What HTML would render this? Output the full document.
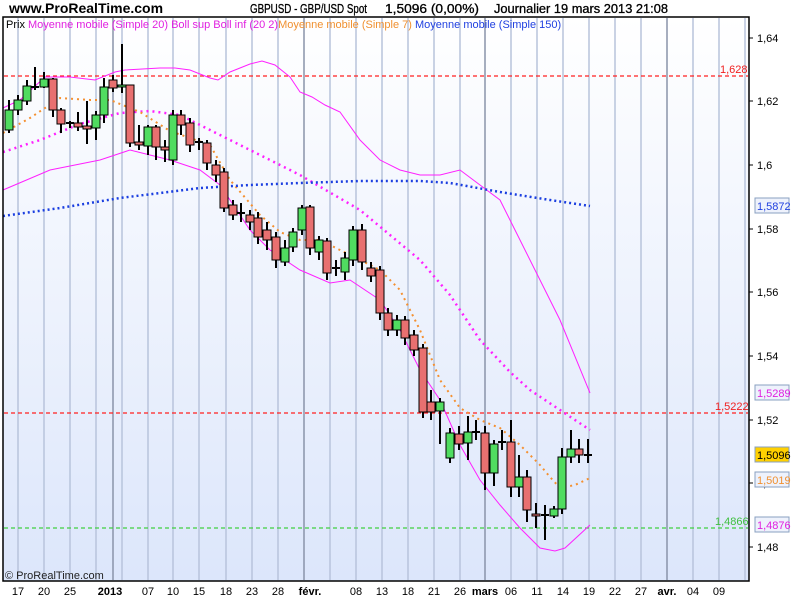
<!DOCTYPE html>
<html><head><meta charset="utf-8"><style>
body{margin:0;background:#fff;width:800px;height:600px;overflow:hidden;font-family:"Liberation Sans",sans-serif}
svg{position:absolute;left:0;top:0}
</style></head><body>
<svg id="s" width="800" height="600" xmlns="http://www.w3.org/2000/svg" font-family="Liberation Sans, sans-serif">
<defs><linearGradient id="g" x1="0" y1="0" x2="0" y2="1"><stop offset="0" stop-color="#ffffff"/><stop offset="1" stop-color="#dce6fb"/></linearGradient></defs>
<rect x="3" y="17" width="746" height="564" fill="url(#g)"/>
<g id="grid"></g>
<g id="lines"></g>
<g id="candles"></g>
<rect x="3" y="17" width="746" height="564" fill="none" stroke="#000" stroke-width="1.5"/>
<text x="9" y="13" font-size="14" font-weight="bold">www.ProRealTime.com</text>
<text x="250" y="13" font-size="12.5" stroke="#000" stroke-width="0.3" textLength="117" lengthAdjust="spacingAndGlyphs">GBPUSD - GBP/USD Spot</text>
<text x="385" y="13" font-size="12.5" stroke="#000" stroke-width="0.3" textLength="94" lengthAdjust="spacingAndGlyphs">1,5096 (0,00%)</text>
<text x="494" y="13" font-size="12.5" stroke="#000" stroke-width="0.3" textLength="174" lengthAdjust="spacingAndGlyphs">Journalier  19 mars 2013 21:08</text>
<text x="6" y="28" font-size="11"><tspan fill="#000">Prix </tspan><tspan fill="#e020e0">Moyenne mobile (Simple 20)  Boll sup Boll inf (20 2)</tspan><tspan fill="#f09030">Moyenne mobile (Simple 7)</tspan><tspan fill="#2040e0">  Moyenne mobile (Simple 150)</tspan></text>
<text x="5" y="579" font-size="11" fill="#222">© ProRealTime.com</text>
<g id="axis" font-size="11"></g>
</svg>
<script>
var NS="http://www.w3.org/2000/svg";
function el(p,t,a,txt){var e=document.createElementNS(NS,t);for(var k in a)e.setAttribute(k,a[k]);if(txt!=null)e.textContent=txt;document.getElementById(p).appendChild(e);return e;}
var gx=[18,44,70,96,122,148,173,199,226,252,278,304,330,356,382,408,434,460,485,511,537,563,589,615,641,667,693,719,745];
gx.forEach(function(x){var d=(x==485||x==667||x==304);el("grid","line",{x1:x,y1:18,x2:x,y2:580,stroke:d?"#8a94aa":"#b8c4dc","stroke-width":1.5});});
el("grid","line",{x1:113,y1:18,x2:113,y2:580,stroke:"#8a94aa","stroke-width":1.5});
el("grid","line",{x1:4,y1:76,x2:748,y2:76,stroke:"#ff2020","stroke-dasharray":"4,3","stroke-width":1.2});
el("grid","line",{x1:4,y1:413,x2:748,y2:413,stroke:"#ff2020","stroke-dasharray":"4,3","stroke-width":1.2});
el("grid","line",{x1:4,y1:528,x2:748,y2:528,stroke:"#40d040","stroke-dasharray":"4,3","stroke-width":1.2});
el("grid","text",{x:720,y:73,"font-size":11,fill:"#f02020"},"1,628");
el("grid","text",{x:715,y:410,"font-size":11,fill:"#f02020"},"1,5222");
el("grid","text",{x:715,y:525,"font-size":11,fill:"#40c040"},"1,4866");
function pl(pts,col,w,dash){el("lines","polyline",{points:pts.map(function(p){return p.join(",")}).join(" "),fill:"none",stroke:col,"stroke-width":w,"stroke-dasharray":dash||"none"});}
pl([[3,108],[20,100],[45,77],[70,77],[95,80],[115,72],[125,70],[160,68],[175,68],[190,70],[210,78],[218,80],[230,72],[250,64],[262,61],[275,65],[290,77],[300,92],[312,97],[325,105],[340,112],[360,140],[380,160],[400,170],[420,175],[440,175],[460,170],[480,185],[500,200],[520,240],[540,280],[560,320],[590,393]],"#ff20ff",1);
pl([[3,190],[50,170],[100,160],[130,150],[170,160],[200,170],[220,185],[250,230],[270,250],[300,270],[330,283],[350,280],[380,300],[400,330],[420,370],[440,400],[460,445],[480,480],[500,505],[520,528],[540,548],[555,551],[565,548],[590,525]],"#ff20ff",1);
pl([[3,152],[40,140],[80,124],[120,113],[150,111],[180,115],[220,135],[260,155],[300,175],[360,210],[420,260],[450,295],[480,340],[510,372],[530,390],[560,410],[590,430]],"#ff20ff",2.5,"2,4");
pl([[3,133],[30,118],[60,98],[90,100],[110,100],[140,112],[170,131],[210,145],[230,180],[260,215],[280,232],[300,240],[320,240],[350,255],[380,270],[400,290],[420,330],[440,380],[460,408],[480,420],[500,428],[520,445],[540,465],[550,477],[560,488],[575,485],[590,478]],"#f49030",2,"2,4");
pl([[3,216],[60,208],[120,198],[200,188],[250,185],[300,183],[360,181],[420,181],[450,183],[500,192],[550,200],[590,206]],"#1a3ee0",2.5,"2,3");
var C=[[9,130,110,100,133],[18,110,100,95,115],[27,101,86,80,105],[35,87,86,67,90],[44,87,79,72,88],[53,79,110,78,117],[61,110,124,108,133],[70,123,123,121,128],[78,123,127,112,131],[87,126,129,101,144],[96,128,115,111,140],[104,115,87,78,123],[113,80,88,75,92],[122,87,85,44,93],[130,85,143,85,147],[139,142,145,125,150],[148,146,127,125,155],[156,127,147,125,160],[165,147,150,140,162],[173,160,115,110,165],[181,115,125,110,135],[190,123,145,118,152],[199,142,142,138,150],[207,143,163,140,170],[216,165,175,160,182],[224,172,208,168,212],[233,205,215,200,220],[241,213,213,203,222],[250,215,222,210,230],[258,218,237,212,244],[267,230,240,222,250],[276,237,260,232,268],[285,262,248,240,266],[293,247,232,228,252],[302,230,208,205,235],[310,207,248,205,255],[319,252,240,236,260],[327,241,273,238,280],[336,268,268,260,276],[345,272,258,252,280],[353,260,230,226,266],[362,230,262,224,270],[371,268,276,262,282],[380,270,313,266,320],[388,313,330,308,336],[397,330,320,315,336],[405,320,338,316,345],[414,335,350,330,356],[423,348,412,344,418],[431,402,412,390,420],[440,411,402,398,444],[450,458,433,428,463],[459,434,444,426,450],[468,443,432,416,460],[476,432,432,420,440],[485,433,473,426,490],[494,473,444,440,486],[502,442,442,430,450],[511,442,487,420,497],[519,487,477,455,497],[527,477,510,470,522],[536,514,516,503,528],[545,515,515,505,540],[554,516,509,506,518],[562,509,457,448,514],[571,457,449,430,463],[579,449,455,439,463],[588,455,455,439,463]];
C.forEach(function(c){var x=c[0],o=c[1],cl=c[2],h=c[3],l=c[4];
 el("candles","line",{x1:x,y1:h,x2:x,y2:l,stroke:"#000","stroke-width":2});
 var top=Math.min(o,cl),ht=Math.abs(o-cl);
 if(ht<2){el("candles","line",{x1:x-4,y1:o,x2:x+4,y2:o,stroke:"#000","stroke-width":2});}
 else el("candles","rect",{x:x-4,y:top,width:8,height:ht,fill:cl<o?"#50dc60":"#e87070",stroke:"#000","stroke-width":1});
});
[["1,64",38],["1,62",101],["1,6",165],["1,58",229],["1,56",292],["1,54",356],["1,52",420],["1,5",483],["1,48",547]].forEach(function(a){
 el("axis","line",{x1:749,y1:a[1],x2:753,y2:a[1],stroke:"#000"});
 el("axis","text",{x:757,y:a[1]+4},a[0]);});
[["1,5872",206,"#2040e0","#eef2fc"],["1,5289",393,"#e020e0","#eef2fc"],["1,5096",455,"#000","#ffd000"],["1,5019",480,"#f09030","#eef2fc"],["1,4876",525,"#e020e0","#eef2fc"]].forEach(function(b){
 el("axis","rect",{x:755,y:b[1]-8,width:34,height:15,fill:b[3],stroke:"#8aa0c0"});
 el("axis","text",{x:757,y:b[1]+4,fill:b[2]},b[0]);});
[["17",18],["20",44],["25",70],["07",148],["10",173],["15",199],["18",226],["23",252],["28",278],["08",356],["13",382],["18",408],["21",434],["26",460],["06",511],["11",537],["14",563],["19",589],["22",615],["27",641],["04",693],["09",719]].forEach(function(l){
 el("axis","text",{x:l[1],y:595,"text-anchor":"middle"},l[0]);});
[["2013",110],["févr.",310],["mars",485],["avr.",667]].forEach(function(l){
 el("axis","text",{x:l[1],y:595,"text-anchor":"middle","font-weight":"bold"},l[0]);});
</script>
</body></html>
